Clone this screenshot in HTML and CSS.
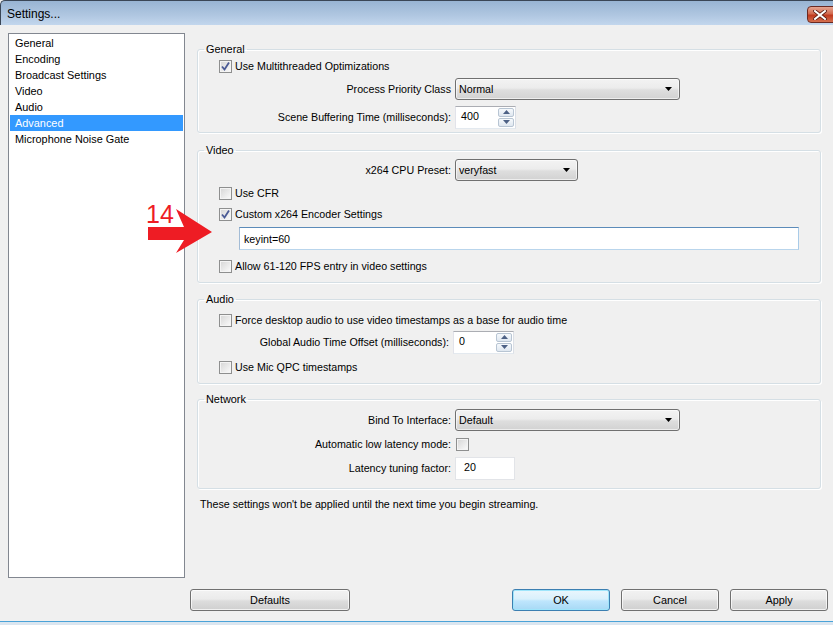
FILE: index.html
```html
<!DOCTYPE html>
<html>
<head>
<meta charset="utf-8">
<title>Settings...</title>
<link rel="stylesheet" href="styles.css">
</head>
<body>
<div class="window">
  <div class="titlebar">
    <span class="title">Settings...</span>
    <div class="close">
      <svg width="14" height="10" viewBox="0 0 14 10"><path d="M2 1 L12 9 M12 1 L2 9" stroke="#5a1a10" stroke-width="3.6" stroke-linecap="square"/><path d="M2 1 L12 9 M12 1 L2 9" stroke="#ffffff" stroke-width="2" stroke-linecap="square"/></svg>
    </div>
  </div>
  <div class="client">
    <div class="main">
      <ul class="nav">
        <li>General</li>
        <li>Encoding</li>
        <li>Broadcast Settings</li>
        <li>Video</li>
        <li>Audio</li>
        <li class="selected">Advanced</li>
        <li>Microphone Noise Gate</li>
      </ul>
      <div class="panel">
        <fieldset class="group g-general">
          <legend>General</legend>
          <div class="inner">
            <div class="check-row r-mt"><span class="cb checked"><svg width="11" height="11" viewBox="0 0 11 11"><path d="M2 5.5 L4.5 8.5 L9 1.5" fill="none" stroke="#4a5a95" stroke-width="1.8"/></svg></span><span>Use Multithreaded Optimizations</span></div>
            <div class="field-row r-prio"><span class="flabel">Process Priority Class</span><div class="select w-wide"><span>Normal</span><svg class="tri" width="7" height="4" viewBox="0 0 7 4"><path d="M0 0 H7 L3.5 4 Z" fill="#000"/></svg></div></div>
            <div class="field-row r-scene"><span class="flabel">Scene Buffering Time (milliseconds):</span><div class="spin"><span class="val">400</span><div class="spinbtns"><div class="sb"><svg width="7" height="4" viewBox="0 0 7 4"><path d="M0 4 H7 L3.5 0 Z" fill="#4d6185"/></svg></div><div class="sb"><svg width="7" height="4" viewBox="0 0 7 4"><path d="M0 0 H7 L3.5 4 Z" fill="#4d6185"/></svg></div></div></div></div>
          </div>
        </fieldset>

        <fieldset class="group g-video">
          <legend>Video</legend>
          <div class="inner">
            <div class="field-row r-preset"><span class="flabel">x264 CPU Preset:</span><div class="select w-narrow"><span>veryfast</span><svg class="tri" width="7" height="4" viewBox="0 0 7 4"><path d="M0 0 H7 L3.5 4 Z" fill="#000"/></svg></div></div>
            <div class="check-row r-cfr"><span class="cb"></span><span>Use CFR</span></div>
            <div class="check-row r-custom"><span class="cb checked"><svg width="11" height="11" viewBox="0 0 11 11"><path d="M2 5.5 L4.5 8.5 L9 1.5" fill="none" stroke="#4a5a95" stroke-width="1.8"/></svg></span><span>Custom x264 Encoder Settings</span></div>
            <div class="textbox r-keyint">keyint=60</div>
            <div class="check-row r-allow"><span class="cb"></span><span>Allow 61-120 FPS entry in video settings</span></div>
          </div>
        </fieldset>

        <fieldset class="group g-audio">
          <legend>Audio</legend>
          <div class="inner">
            <div class="check-row r-force"><span class="cb"></span><span>Force desktop audio to use video timestamps as a base for audio time</span></div>
            <div class="field-row r-offset"><span class="flabel shift">Global Audio Time Offset (milliseconds):</span><div class="spin"><span class="val">0</span><div class="spinbtns"><div class="sb"><svg width="7" height="4" viewBox="0 0 7 4"><path d="M0 4 H7 L3.5 0 Z" fill="#4d6185"/></svg></div><div class="sb"><svg width="7" height="4" viewBox="0 0 7 4"><path d="M0 0 H7 L3.5 4 Z" fill="#4d6185"/></svg></div></div></div></div>
            <div class="check-row r-mic"><span class="cb"></span><span>Use Mic QPC timestamps</span></div>
          </div>
        </fieldset>

        <fieldset class="group g-network">
          <legend>Network</legend>
          <div class="inner">
            <div class="field-row r-bind"><span class="flabel">Bind To Interface:</span><div class="select w-wide"><span>Default</span><svg class="tri" width="7" height="4" viewBox="0 0 7 4"><path d="M0 0 H7 L3.5 4 Z" fill="#000"/></svg></div></div>
            <div class="field-row r-auto"><span class="flabel">Automatic low latency mode:</span><span class="cb cb-inline"></span></div>
            <div class="field-row r-factor"><span class="flabel">Latency tuning factor:</span><div class="plainbox">20</div></div>
          </div>
        </fieldset>

        <p class="note">These settings won't be applied until the next time you begin streaming.</p>
      </div>
    </div>
    <div class="buttons">
      <button class="btn btn-defaults">Defaults</button>
      <button class="btn btn-ok">OK</button>
      <button class="btn">Cancel</button>
      <button class="btn">Apply</button>
    </div>
  </div>
  <div class="frame-bottom"></div>

  <span class="annot-num">14</span>
  <svg class="annot-arrow" width="70" height="48" viewBox="0 0 70 48"><polygon points="2,20 38,20 30,2 66,25 30,46 38,33 2,33" fill="#ee1c24"/></svg>
</div>
</body>
</html>
```

FILE: styles.css
```css
html, body {
  margin: 0;
  padding: 0;
}

body {
  font-family: "Liberation Sans", Arial, sans-serif;
  font-size: 10.7px;
  color: #000;
  background: #f0f0f0;
}

.window {
  position: relative;
  width: 833px;
  height: 625px;
  overflow: hidden;
  background: #f0f0f0;
}

.titlebar {
  box-sizing: border-box;
  height: 25px;
  display: flex;
  align-items: center;
  justify-content: space-between;
  border-top: 1px solid #3a4656;
  border-left: 1px solid #3a4656;
  border-top-left-radius: 5px;
  background: linear-gradient(#98b4d3, #b0c7e1 60%, #c2d6ed);
}

.title {
  padding-left: 6px;
  font-size: 12px;
  color: #000;
  margin-top: 1px;
}

.close {
  box-sizing: border-box;
  width: 30px;
  height: 17px;
  margin-right: -4px;
  margin-top: 5px;
  align-self: flex-start;
  border: 1px solid #6b2a22;
  border-radius: 4px;
  background: linear-gradient(#e5a591, #d26a4f 45%, #c0391e 55%, #d4704f);
  display: flex;
  align-items: center;
  justify-content: center;
  padding-right: 4px;
}

.client {
  padding: 8px 0 0 8px;
}

.main {
  display: flex;
  gap: 11px;
}

.nav {
  box-sizing: border-box;
  width: 177px;
  height: 545px;
  margin: 0;
  padding: 1px 1px 0 1px;
  list-style: none;
  background: #fff;
  border: 1px solid #828790;
  font-size: 10.9px;
}

.nav li {
  height: 16px;
  line-height: 16px;
  padding-left: 5px;
}

.nav li.selected {
  background: #3399ff;
  color: #fff;
}

.panel {
  flex: 1;
  padding-right: 12px;
  padding-top: 9px;
  padding-left: 1px;
}

.group {
  margin: 0;
  padding: 0;
  border: 1px solid #d5dfe5;
  border-radius: 3px;
  box-shadow: inset 1px 1px 0 #fff, 1px 1px 0 #fff;
  min-width: 0;
}

.group legend {
  margin-left: 6px;
  padding: 0 2px;
  line-height: 14px;
  font-size: 10.9px;
}

.g-video { margin-top: 10px; }
.g-audio { margin-top: 9px; }
.g-network { margin-top: 8px; }

.inner {
  padding-left: 21px;
}

.g-general .inner { padding-bottom: 4px; }
.g-video .inner { padding-bottom: 8px; }
.g-audio .inner { padding-bottom: 8px; }
.g-network .inner { padding-bottom: 9px; }

.check-row {
  display: flex;
  align-items: center;
  height: 16px;
  gap: 3px;
}

.field-row {
  display: flex;
  align-items: center;
  height: 22px;
  gap: 4px;
}

.flabel {
  width: 232px;
  text-align: right;
  white-space: nowrap;
}

.flabel.shift {
  width: 230px;
}

.r-mt { margin-top: 2px; }
.r-prio { margin-top: 4px; }
.r-scene { margin-top: 6px; }

.r-preset { margin-top: 2px; }
.r-cfr { margin-top: 4px; }
.r-custom { margin-top: 5px; }
.r-keyint { margin-top: 5px; }
.r-allow { margin-top: 8px; }

.r-force { margin-top: 6px; }
.r-offset { margin-top: 3px; }
.r-mic { margin-top: 6px; }

.r-bind { margin-top: 3px; }
.r-auto { margin-top: 5px; height: 16px; }
.r-factor { margin-top: 5px; }

.cb {
  box-sizing: border-box;
  width: 13px;
  height: 13px;
  flex: none;
  border: 1px solid #8e8f8f;
  background: linear-gradient(135deg, #d5d5d5, #f4f4f4 80%, #fbfbfb);
  box-shadow: inset 0 0 0 1px #f4f4f4;
  display: flex;
  align-items: center;
  justify-content: center;
}

.cb-inline {
  margin-left: 1px;
}

.select {
  box-sizing: border-box;
  height: 22px;
  display: flex;
  align-items: center;
  justify-content: space-between;
  padding: 0 7px 0 3px;
  border: 1px solid #707070;
  border-radius: 3px;
  background: linear-gradient(#f3f3f3, #ececec 45%, #dedede 55%, #d2d2d2);
  box-shadow: inset 0 0 0 1px rgba(255,255,255,0.6);
}

.w-wide { width: 225px; }
.w-narrow { width: 123px; }

.spin {
  box-sizing: border-box;
  width: 61px;
  height: 23px;
  display: flex;
  align-items: center;
  justify-content: space-between;
  background: #fff;
  border: 1px solid;
  border-color: #abadb3 #dbdfe6 #e3e9ef #e2e3ea;
  padding: 0 1px 0 5px;
}

.spin .val {
  margin-top: -3px;
}

.spinbtns {
  display: flex;
  flex-direction: column;
  gap: 1px;
}

.sb {
  box-sizing: border-box;
  width: 16px;
  height: 9px;
  border: 1px solid #b8c5d3;
  border-radius: 2px;
  background: linear-gradient(#f6f9fc, #dfe7f0);
  display: flex;
  align-items: center;
  justify-content: center;
}

.textbox {
  box-sizing: border-box;
  width: 560px;
  height: 23px;
  margin-left: 20px;
  background: #fff;
  border: 1px solid;
  border-color: #5c8bb9 #a9cbe8 #b9d5ec #a3bcd6;
  padding-left: 4px;
  display: flex;
  align-items: center;
}

.plainbox {
  box-sizing: border-box;
  width: 60px;
  height: 23px;
  background: #fff;
  border: 1px solid;
  border-color: #e2e4e8;
  padding: 0 0 3px 8px;
  display: flex;
  align-items: center;
}

.note {
  margin: 8px 0 0 3px;
  line-height: 14px;
}

.buttons {
  display: flex;
  gap: 11px;
  margin-top: 11px;
  padding-right: 5px;
}

.btn {
  box-sizing: border-box;
  width: 98px;
  height: 22px;
  font-family: "Liberation Sans", Arial, sans-serif;
  font-size: 10.9px;
  color: #000;
  border: 1px solid #707070;
  border-radius: 3px;
  background: linear-gradient(#f2f2f2, #ebebeb 45%, #dddddd 55%, #cfcfcf);
  box-shadow: inset 0 0 0 1px rgba(255,255,255,0.7);
  padding: 0;
}

.btn-defaults {
  width: 160px;
  margin-left: 182px;
  margin-right: auto;
}

.btn-ok {
  border-color: #3c7fb1;
  background: linear-gradient(#eaf6fd, #d9f0fc 45%, #bee6fd 55%, #a7d9f5);
  box-shadow: inset 0 0 0 1px #9fe5fb;
}

.frame-bottom {
  position: absolute;
  left: 0;
  right: 0;
  bottom: 0;
  height: 3px;
  border-top: 1px solid #4aa3d8;
  background: #dbe6f0;
}

.annot-num {
  position: absolute;
  left: 146px;
  top: 200px;
  font-family: "Liberation Sans", Arial, sans-serif;
  font-size: 25px;
  line-height: 28px;
  color: #ee1c24;
}

.annot-arrow {
  position: absolute;
  left: 146px;
  top: 207px;
}
```
